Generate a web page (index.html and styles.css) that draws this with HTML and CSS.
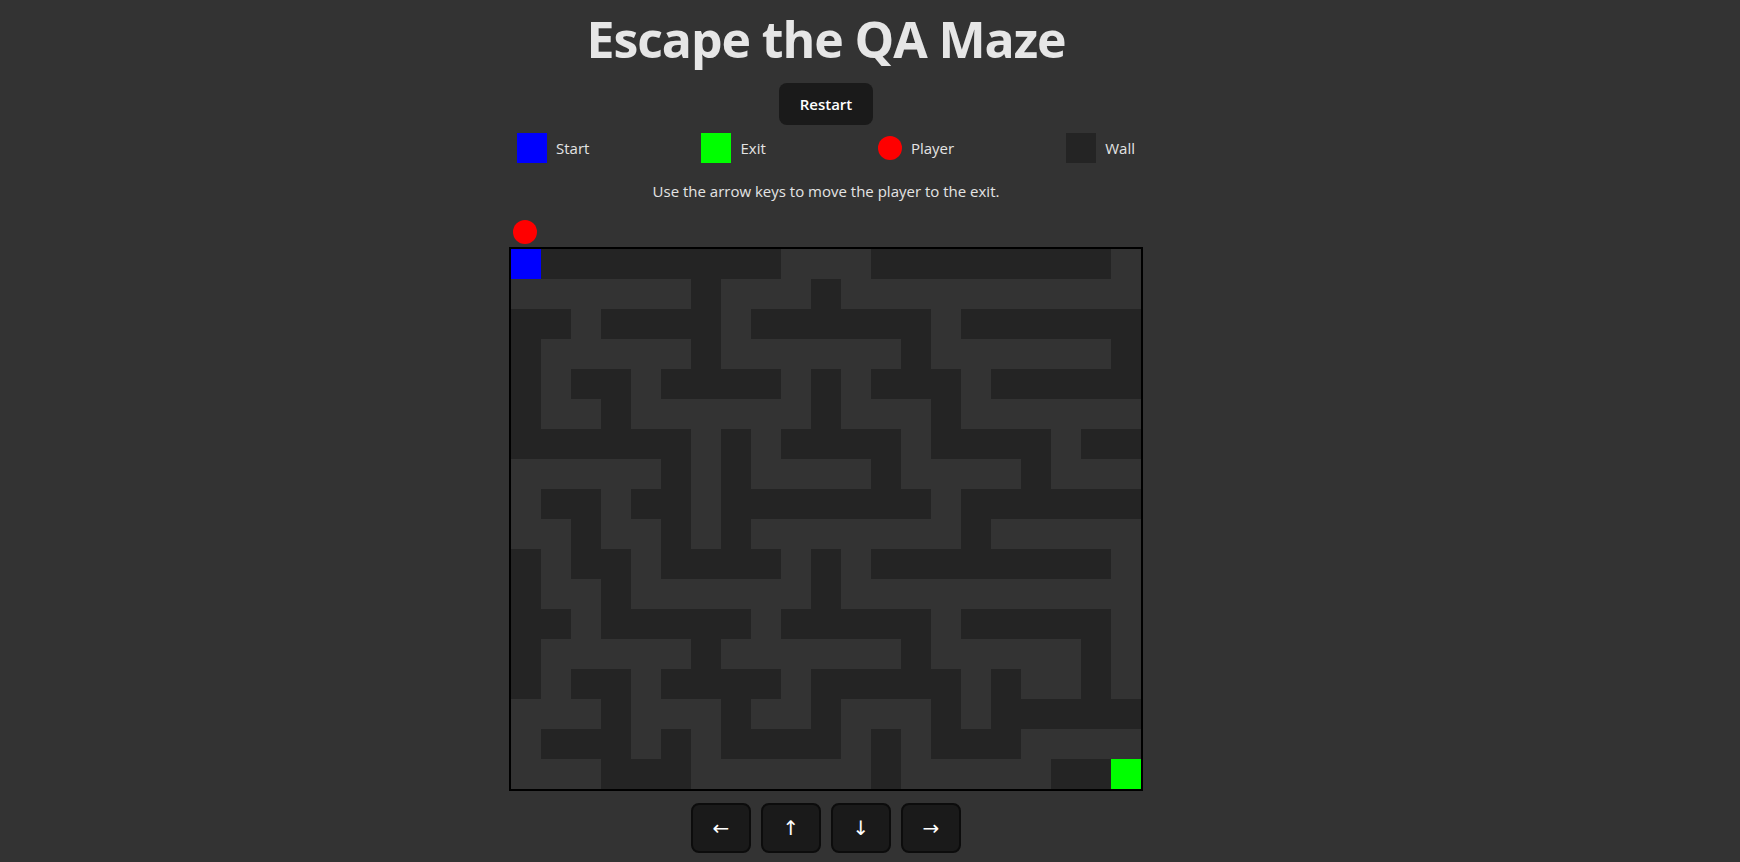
FILE: index.html
```html
<!DOCTYPE html>
<html lang="en">
<head>
<meta charset="utf-8">
<title>Escape the QA Maze</title>
<link rel="stylesheet" href="styles.css">
</head>
<body>
<div class="app">
  <h1 class="title">Escape the QA Maze</h1>
  <button class="restart">Restart</button>
  <div class="legend">
    <div class="item"><span class="sw sw-start"></span><span>Start</span></div>
    <div class="item"><span class="sw sw-exit"></span><span>Exit</span></div>
    <div class="item"><span class="dot"></span><span>Player</span></div>
    <div class="item"><span class="sw sw-wall"></span><span>Wall</span></div>
  </div>
  <p class="hint">Use the arrow keys to move the player to the exit.</p>
  <div class="board">
    <div class="player-row"><span class="dot"></span></div>
    <div class="maze">
<i class="s"></i><i class="w"></i><i class="w"></i><i class="w"></i><i class="w"></i><i class="w"></i><i class="w"></i><i class="w"></i><i class="w"></i><i></i><i></i><i></i><i class="w"></i><i class="w"></i><i class="w"></i><i class="w"></i><i class="w"></i><i class="w"></i><i class="w"></i><i class="w"></i><i></i>
<i></i><i></i><i></i><i></i><i></i><i></i><i class="w"></i><i></i><i></i><i></i><i class="w"></i><i></i><i></i><i></i><i></i><i></i><i></i><i></i><i></i><i></i><i></i>
<i class="w"></i><i class="w"></i><i></i><i class="w"></i><i class="w"></i><i class="w"></i><i class="w"></i><i></i><i class="w"></i><i class="w"></i><i class="w"></i><i class="w"></i><i class="w"></i><i class="w"></i><i></i><i class="w"></i><i class="w"></i><i class="w"></i><i class="w"></i><i class="w"></i><i class="w"></i>
<i class="w"></i><i></i><i></i><i></i><i></i><i></i><i class="w"></i><i></i><i></i><i></i><i></i><i></i><i></i><i class="w"></i><i></i><i></i><i></i><i></i><i></i><i></i><i class="w"></i>
<i class="w"></i><i></i><i class="w"></i><i class="w"></i><i></i><i class="w"></i><i class="w"></i><i class="w"></i><i class="w"></i><i></i><i class="w"></i><i></i><i class="w"></i><i class="w"></i><i class="w"></i><i></i><i class="w"></i><i class="w"></i><i class="w"></i><i class="w"></i><i class="w"></i>
<i class="w"></i><i></i><i></i><i class="w"></i><i></i><i></i><i></i><i></i><i></i><i></i><i class="w"></i><i></i><i></i><i></i><i class="w"></i><i></i><i></i><i></i><i></i><i></i><i></i>
<i class="w"></i><i class="w"></i><i class="w"></i><i class="w"></i><i class="w"></i><i class="w"></i><i></i><i class="w"></i><i></i><i class="w"></i><i class="w"></i><i class="w"></i><i class="w"></i><i></i><i class="w"></i><i class="w"></i><i class="w"></i><i class="w"></i><i></i><i class="w"></i><i class="w"></i>
<i></i><i></i><i></i><i></i><i></i><i class="w"></i><i></i><i class="w"></i><i></i><i></i><i></i><i></i><i class="w"></i><i></i><i></i><i></i><i></i><i class="w"></i><i></i><i></i><i></i>
<i></i><i class="w"></i><i class="w"></i><i></i><i class="w"></i><i class="w"></i><i></i><i class="w"></i><i class="w"></i><i class="w"></i><i class="w"></i><i class="w"></i><i class="w"></i><i class="w"></i><i></i><i class="w"></i><i class="w"></i><i class="w"></i><i class="w"></i><i class="w"></i><i class="w"></i>
<i></i><i></i><i class="w"></i><i></i><i></i><i class="w"></i><i></i><i class="w"></i><i></i><i></i><i></i><i></i><i></i><i></i><i></i><i class="w"></i><i></i><i></i><i></i><i></i><i></i>
<i class="w"></i><i></i><i class="w"></i><i class="w"></i><i></i><i class="w"></i><i class="w"></i><i class="w"></i><i class="w"></i><i></i><i class="w"></i><i></i><i class="w"></i><i class="w"></i><i class="w"></i><i class="w"></i><i class="w"></i><i class="w"></i><i class="w"></i><i class="w"></i><i></i>
<i class="w"></i><i></i><i></i><i class="w"></i><i></i><i></i><i></i><i></i><i></i><i></i><i class="w"></i><i></i><i></i><i></i><i></i><i></i><i></i><i></i><i></i><i></i><i></i>
<i class="w"></i><i class="w"></i><i></i><i class="w"></i><i class="w"></i><i class="w"></i><i class="w"></i><i class="w"></i><i></i><i class="w"></i><i class="w"></i><i class="w"></i><i class="w"></i><i class="w"></i><i></i><i class="w"></i><i class="w"></i><i class="w"></i><i class="w"></i><i class="w"></i><i></i>
<i class="w"></i><i></i><i></i><i></i><i></i><i></i><i class="w"></i><i></i><i></i><i></i><i></i><i></i><i></i><i class="w"></i><i></i><i></i><i></i><i></i><i></i><i class="w"></i><i></i>
<i class="w"></i><i></i><i class="w"></i><i class="w"></i><i></i><i class="w"></i><i class="w"></i><i class="w"></i><i class="w"></i><i></i><i class="w"></i><i class="w"></i><i class="w"></i><i class="w"></i><i class="w"></i><i></i><i class="w"></i><i></i><i></i><i class="w"></i><i></i>
<i></i><i></i><i></i><i class="w"></i><i></i><i></i><i></i><i class="w"></i><i></i><i></i><i class="w"></i><i></i><i></i><i></i><i class="w"></i><i></i><i class="w"></i><i class="w"></i><i class="w"></i><i class="w"></i><i class="w"></i>
<i></i><i class="w"></i><i class="w"></i><i class="w"></i><i></i><i class="w"></i><i></i><i class="w"></i><i class="w"></i><i class="w"></i><i class="w"></i><i></i><i class="w"></i><i></i><i class="w"></i><i class="w"></i><i class="w"></i><i></i><i></i><i></i><i></i>
<i></i><i></i><i></i><i class="w"></i><i class="w"></i><i class="w"></i><i></i><i></i><i></i><i></i><i></i><i></i><i class="w"></i><i></i><i></i><i></i><i></i><i></i><i class="w"></i><i class="w"></i><i class="e"></i>
    </div>
  </div>
  <div class="controls">
    <button class="key">&larr;</button>
    <button class="key">&uarr;</button>
    <button class="key">&darr;</button>
    <button class="key">&rarr;</button>
  </div>
</div>
</body>
</html>
```
FILE: styles.css
```css
html, body {
  margin: 0;
  padding: 0;
  background: #333333;
}

body {
  color: rgba(255, 255, 255, 0.87);
  font-family: "Open Sans", "Noto Sans", "DejaVu Sans", sans-serif;
}

.app {
  width: 1652px;
  display: flex;
  flex-direction: column;
  align-items: center;
}

.title {
  margin: 12px 0 16px;
  font-size: 50px;
  line-height: 1.1;
  font-weight: 700;
  letter-spacing: -1.1px;
  color: #e6e6e6;
}

.restart {
  height: 42px;
  padding: 0 20px;
  border: 1px solid transparent;
  border-radius: 8px;
  background: #1a1a1a;
  color: #ffffff;
  font-family: inherit;
  font-size: 15px;
  font-weight: 600;
  cursor: pointer;
}

.legend {
  width: 618px;
  height: 30px;
  margin-top: 8px;
  display: flex;
  justify-content: space-between;
  align-items: center;
}

.item {
  display: flex;
  align-items: center;
  gap: 9px;
  font-size: 15px;
  color: #e4e4e4;
}

.sw {
  display: block;
  width: 30px;
  height: 30px;
}

.sw-start { background: #0000ff; }
.sw-exit { background: #00ff00; }
.sw-wall { background: #242424; }

.dot {
  display: block;
  width: 24px;
  height: 24px;
  border-radius: 50%;
  background: #ff0000;
}

.hint {
  margin: 16px 0 0;
  font-size: 15px;
  line-height: 24px;
  color: #e4e4e4;
}

.board {
  width: 634px;
  margin-top: 14px;
}

.player-row {
  height: 30px;
  display: flex;
  align-items: center;
  padding-left: 4px;
}

.maze {
  display: grid;
  grid-template-columns: repeat(21, 30px);
  grid-auto-rows: 30px;
  border: 2px solid #000000;
}

.maze i {
  display: block;
  background: #333333;
}

.maze .w { background: #242424; }
.maze .s { background: #0000ff; }
.maze .e { background: #00ff00; }

.controls {
  display: flex;
  gap: 10px;
  margin-top: 12px;
}

.key {
  width: 60px;
  height: 50px;
  padding: 0;
  border: 2px solid #0c0c0c;
  border-radius: 8px;
  background: #1a1a1a;
  color: #ffffff;
  font-family: "DejaVu Sans", sans-serif;
  font-size: 20px;
  cursor: pointer;
}
```
